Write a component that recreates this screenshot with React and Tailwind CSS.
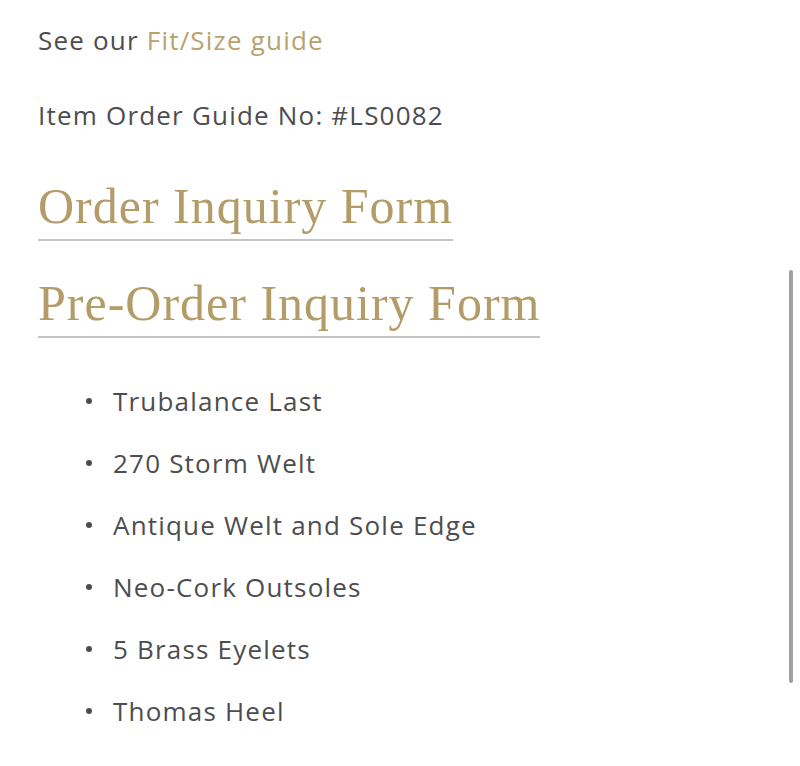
const features = [
  'Trubalance Last',
  '270 Storm Welt',
  'Antique Welt and Sole Edge',
  'Neo-Cork Outsoles',
  '5 Brass Eyelets',
  'Thomas Heel',
]

export default function App() {
  return (
    <div className="relative h-[766px] w-[800px] overflow-hidden bg-white text-[#4d4d4f] font-['Open_Sans',sans-serif]">
      <div className="px-[38px] pt-[22px]">
        <p className="text-[26px] leading-[36px] tracking-[1.2px]">
          See our <a href="#" className="text-[#b7a26f]">Fit/Size guide</a>
        </p>
        <p className="mt-[39px] text-[26px] leading-[36px] tracking-[1.2px]">Item Order Guide No: #LS0082</p>

        <div className="mt-[45px] flex flex-col items-start">
          <a href="#" className="border-b-2 border-[#c4c4c6] pb-[5px] font-['Liberation_Serif',serif] text-[50px] leading-[56px] tracking-[1px] text-[#b49c68]">
            Order Inquiry Form
          </a>
          <a href="#" className="mt-[34px] border-b-2 border-[#c4c4c6] pb-[5px] font-['Liberation_Serif',serif] text-[50px] leading-[56px] tracking-[1px] text-[#b49c68]">
            Pre-Order Inquiry Form
          </a>
        </div>

        <ul className="mt-[45px] flex flex-col gap-[26px] pl-[48px]">
          {features.map(f => (
            <li key={f} className="flex items-center text-[26px] leading-[36px] tracking-[1.2px]">
              <span className="mr-[21px] h-[6px] w-[6px] rounded-full bg-[#4d4d4f]" />
              {f}
            </li>
          ))}
        </ul>
      </div>

      <div className="absolute right-[7px] top-[270px] h-[413px] w-[4px] rounded-full bg-[#a0a0a0]" />
    </div>
  )
}
